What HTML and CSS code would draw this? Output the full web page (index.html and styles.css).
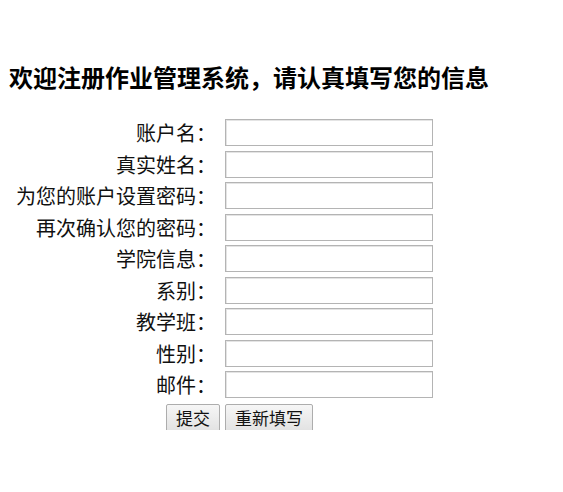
FILE: index.html
```html
<!DOCTYPE html>
<html lang="zh-CN">
<head>
  <meta charset="utf-8">
  <title>注册</title>
  <link rel="stylesheet" href="styles.css">
</head>
<body>
  <h1 id="title">欢迎注册作业管理系统，请认真填写您的信息</h1>
  <form id="register_form" class="form">
    <label class="form__label" for="account">账户名：</label>
    <input class="form__input" type="text" id="account" name="account">
    <label class="form__label" for="realname">真实姓名：</label>
    <input class="form__input" type="text" id="realname" name="realname">
    <label class="form__label" for="password">为您的账户设置密码：</label>
    <input class="form__input" type="password" id="password" name="password">
    <label class="form__label" for="password2">再次确认您的密码：</label>
    <input class="form__input" type="password" id="password2" name="password2">
    <label class="form__label" for="college">学院信息：</label>
    <input class="form__input" type="text" id="college" name="college">
    <label class="form__label" for="dept">系别：</label>
    <input class="form__input" type="text" id="dept" name="dept">
    <label class="form__label" for="klass">教学班：</label>
    <input class="form__input" type="text" id="klass" name="klass">
    <label class="form__label" for="gender">性别：</label>
    <input class="form__input" type="text" id="gender" name="gender">
    <label class="form__label" for="email">邮件：</label>
    <input class="form__input" type="text" id="email" name="email">
    <div class="form__submit">
      <button class="button" type="submit">提交</button>
    </div>
    <div class="form__reset">
      <button class="button" type="reset">重新填写</button>
    </div>
  </form>
</body>
</html>
```
FILE: styles.css
```css
* {
  font-family: "Noto Sans CJK SC", "Noto Sans", sans-serif;
}

body {
  margin: 8px;
  background-color: white;
  color: #111;
}

#title {
  font-size: 24px;
  font-weight: bold;
  line-height: 34px;
  margin: 52px 0 25px 1px;
  color: #000;
}

.form {
  display: grid;
  grid-template-columns: 212px 208px;
  grid-auto-rows: 27px;
  column-gap: 5px;
  row-gap: 4.5px;
  align-items: center;
}

.form__label {
  text-align: right;
  font-size: 20px;
  line-height: 27px;
  padding-right: 4px;
  white-space: nowrap;
}

.form__input {
  box-sizing: border-box;
  width: 208px;
  height: 27px;
  margin: 0;
  border: 1px solid #b4b4b4;
  box-shadow: inset 1px 1px 0 #e4e4e4;
  background-color: white;
  padding: 0 4px;
}

.form__submit {
  text-align: right;
  margin-top: 3px;
}

.form__reset {
  margin-top: 3px;
}

.button {
  height: 28px;
  font-size: 17px;
  line-height: 26px;
  padding: 0 9px;
  color: #111;
  background: linear-gradient(#f6f6f6, #e2e2e2);
  border: 1px solid #adadad;
  border-radius: 2px;
  margin: 0;
}
```
